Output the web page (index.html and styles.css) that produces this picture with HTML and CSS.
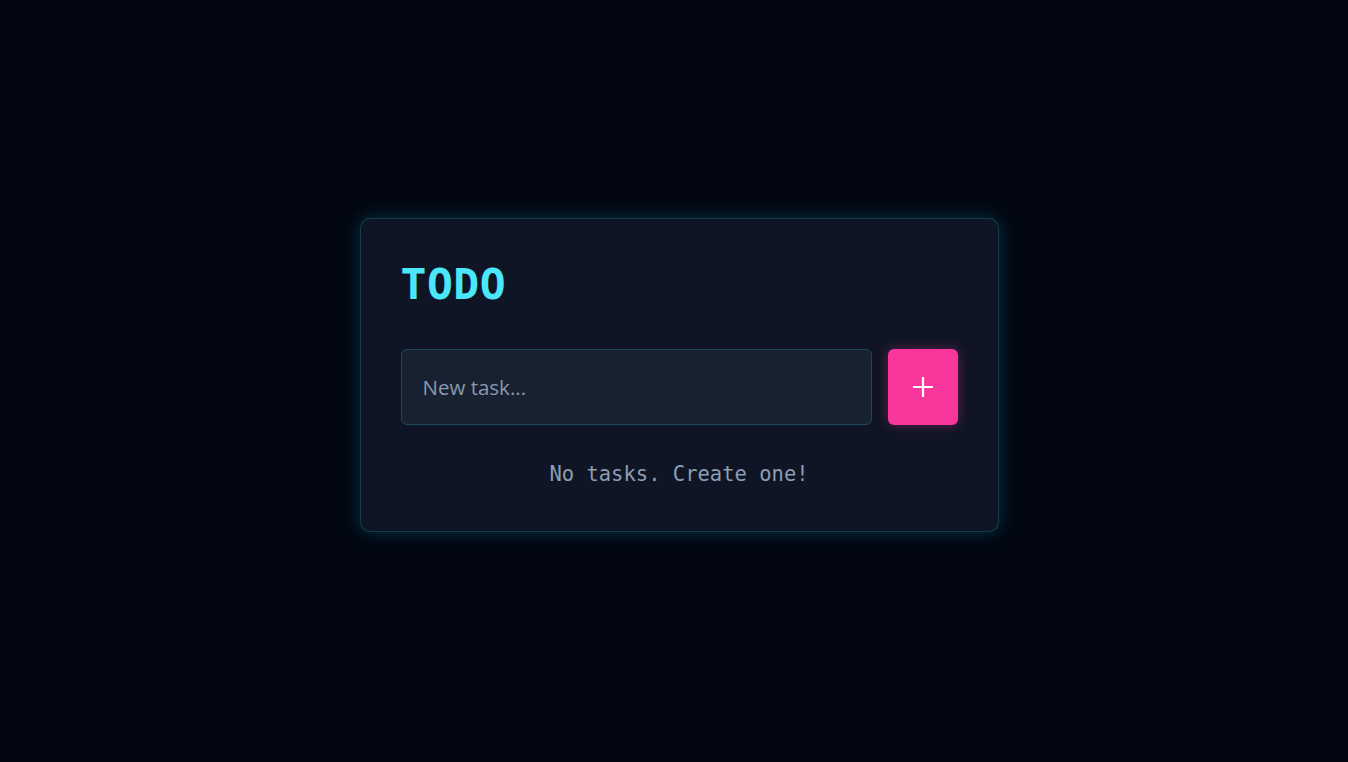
FILE: index.html
```html
<!DOCTYPE html>
<html lang="en">
<head>
<meta charset="utf-8">
<title>TODO</title>
<link rel="stylesheet" href="styles.css">
</head>
<body>
<main class="page">
  <section class="card">
    <h1 class="title">TODO</h1>
    <form class="add-row">
      <input class="task-input" type="text" placeholder="New task...">
      <button class="add-btn" type="button" aria-label="Add">
        <svg width="20" height="20" viewBox="0 0 20 20"><path d="M10 0V20M0 10H20" stroke="#ffffff" stroke-width="2.2" fill="none"/></svg>
      </button>
    </form>
    <p class="empty">No tasks. Create one!</p>
  </section>
</main>
</body>
</html>
```
FILE: styles.css
```css
html, body {
  margin: 0;
  padding: 0;
  background: #020712;
  height: 100%;
}
.page {
  display: flex;
  justify-content: center;
  align-items: flex-start;
  padding-top: 218px;
  padding-left: 10px;
  box-sizing: border-box;
  min-height: 100%;
}
.card {
  width: 639px;
  box-sizing: border-box;
  padding: 40px 40px 45px 40px;
  background: #0f1524;
  border: 1px solid rgba(34, 211, 238, 0.22);
  border-radius: 10px;
  box-shadow: 0 0 18px rgba(34, 211, 238, 0.22);
}
.title {
  margin: 0;
  font-family: "DejaVu Sans Mono", monospace;
  font-weight: bold;
  font-size: 43px;
  letter-spacing: 0.5px;
  line-height: 50px;
  color: #4be6f9;
}
.add-row {
  display: flex;
  gap: 16px;
  margin: 40px 0 0 0;
}
.task-input {
  flex: 1;
  height: 76px;
  box-sizing: border-box;
  background: #182130;
  border: 1px solid #1c4a5c;
  border-radius: 6px;
  padding: 0 21px;
  font-family: "Open Sans", sans-serif;
  font-size: 20.5px;
  color: #e2e8f0;
  outline: none;
}
.task-input::placeholder {
  color: #8a99ad;
}
.add-btn {
  width: 70px;
  height: 76px;
  border: none;
  border-radius: 6px;
  background: #f8369b;
  box-shadow: 0 0 12px rgba(248, 54, 155, 0.35);
  display: flex;
  align-items: center;
  justify-content: center;
  padding: 0;
  cursor: pointer;
}
.empty {
  margin: 37px 0 0 0;
  text-align: center;
  font-family: "DejaVu Sans Mono", monospace;
  font-size: 20.5px;
  line-height: 24px;
  color: #8d9db2;
}
```
